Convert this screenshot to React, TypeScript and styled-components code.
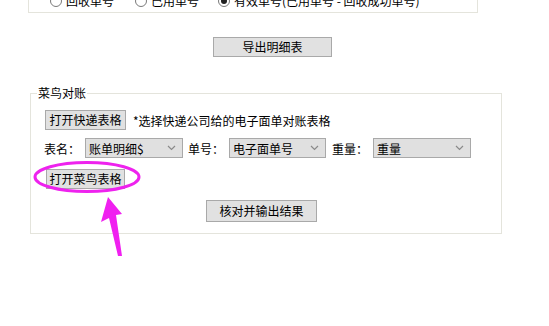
import React from 'react';
import styled, { createGlobalStyle } from 'styled-components';

const Global = createGlobalStyle`
  html, body {
    margin: 0;
    padding: 0;
    background: #ffffff;
  }
  body {
    font-family: "Noto Sans CJK SC", "Liberation Sans", sans-serif;
    font-size: 12px;
    color: #000;
  }
`;

const Page = styled.div`
  position: relative;
  width: 549px;
  height: 326px;
  overflow: hidden;
`;

const TopGroup = styled.div`
  margin-left: 28px;
  width: 448px;
  height: 18px;
  border: 1px solid #e4e4dc;
  border-top: none;
`;

const RadioRow = styled.div`
  display: flex;
  align-items: center;
  height: 14px;
  margin-top: -6px;
  padding-left: 21px;
`;

const RadioItem = styled.label<{ $w: number }>`
  display: flex;
  align-items: center;
  gap: 4px;
  width: ${p => p.$w}px;
  white-space: nowrap;
  line-height: 14px;
`;

const RadioDot = styled.span<{ $on?: boolean }>`
  box-sizing: border-box;
  width: 12px;
  height: 12px;
  border-radius: 50%;
  border: 1px solid #7a7a7a;
  background: #fff;
  display: flex;
  align-items: center;
  justify-content: center;
  &::after {
    content: '';
    width: 6px;
    height: 6px;
    border-radius: 50%;
    background: ${p => (p.$on ? '#222' : 'transparent')};
  }
`;

const ExportRow = styled.div`
  padding-left: 213px;
  margin-top: 24px;
`;

const Button = styled.button<{ $w: number; $h?: number }>`
  box-sizing: border-box;
  width: ${p => p.$w}px;
  height: ${p => p.$h ?? 20}px;
  padding: 0;
  border: 1px solid #a9a9a9;
  background: #e1e1e1;
  font-family: "Noto Sans CJK SC", "Liberation Sans", sans-serif;
  font-size: 12px;
  color: #000;
  line-height: 1;
  display: flex;
  align-items: center;
  justify-content: center;
`;

const Group = styled.fieldset`
  box-sizing: border-box;
  margin: 29px 0 0 30px;
  width: 472px;
  height: 148px;
  padding: 10px 0 0 14px;
  border: 1px solid #e4e4dc;
`;

const Legend = styled.legend`
  padding: 0 1px;
  margin-left: -8px;
  line-height: 14px;
`;

const Row = styled.div<{ $mt: number; $pl?: number }>`
  display: flex;
  align-items: center;
  margin-top: ${p => p.$mt}px;
  padding-left: ${p => p.$pl ?? 0}px;
`;

const Hint = styled.span`
  margin-left: 7px;
  white-space: nowrap;
`;

const FieldLabel = styled.span<{ $ml?: number }>`
  margin-left: ${p => p.$ml ?? 0}px;
  width: 41px;
  white-space: nowrap;
`;

const Combo = styled.div<{ $w: number }>`
  box-sizing: border-box;
  width: ${p => p.$w}px;
  height: 20px;
  border: 1px solid #a9a9a9;
  background: #e0e0e0;
  display: flex;
  align-items: center;
  justify-content: space-between;
  padding: 0 6px 0 3px;
  white-space: nowrap;
`;

const Overlay = styled.svg`
  position: absolute;
  left: 0;
  top: 0;
  pointer-events: none;
`;

const Chevron = () => (
  <svg width="9" height="6" viewBox="0 0 9 6">
    <path d="M1 1 L4.5 4.5 L8 1" fill="none" stroke="#8a8a8a" strokeWidth="1.2" />
  </svg>
);

export default function App() {
  return (
    <Page>
      <Global />
      <TopGroup>
        <RadioRow>
          <RadioItem $w={85}><RadioDot />回收单号</RadioItem>
          <RadioItem $w={83}><RadioDot />已用单号</RadioItem>
          <RadioItem $w={240}><RadioDot $on />有效单号(已用单号 - 回收成功单号)</RadioItem>
        </RadioRow>
      </TopGroup>

      <ExportRow>
        <Button $w={119}>导出明细表</Button>
      </ExportRow>

      <Group>
        <Legend>菜鸟对账</Legend>
        <Row $mt={0}>
          <Button $w={81}>打开快递表格</Button>
          <Hint>*选择快递公司给的电子面单对账表格</Hint>
        </Row>
        <Row $mt={8} $pl={0}>
          <FieldLabel $ml={-1}>表名：</FieldLabel>
          <Combo $w={98}>账单明细$<Chevron /></Combo>
          <FieldLabel $ml={5}>单号：</FieldLabel>
          <Combo $w={97}>电子面单号<Chevron /></Combo>
          <FieldLabel $ml={6}>重量：</FieldLabel>
          <Combo $w={98}>重量<Chevron /></Combo>
        </Row>
        <Row $mt={11} $pl={1}>
          <Button $w={79}>打开菜鸟表格</Button>
        </Row>
        <Row $mt={11} $pl={161}>
          <Button $w={111} $h={22}>核对并输出结果</Button>
        </Row>
      </Group>

      <Overlay width="549" height="326" viewBox="0 0 549 326">
        <ellipse cx="87" cy="177" rx="52" ry="14.5" fill="none" stroke="#ee22ee" strokeWidth="3" />
        <polygon points="108,197 122,214 116,215 122,256 118,256 109,218 101,222" fill="#f020f0" />
      </Overlay>
    </Page>
  );
}
